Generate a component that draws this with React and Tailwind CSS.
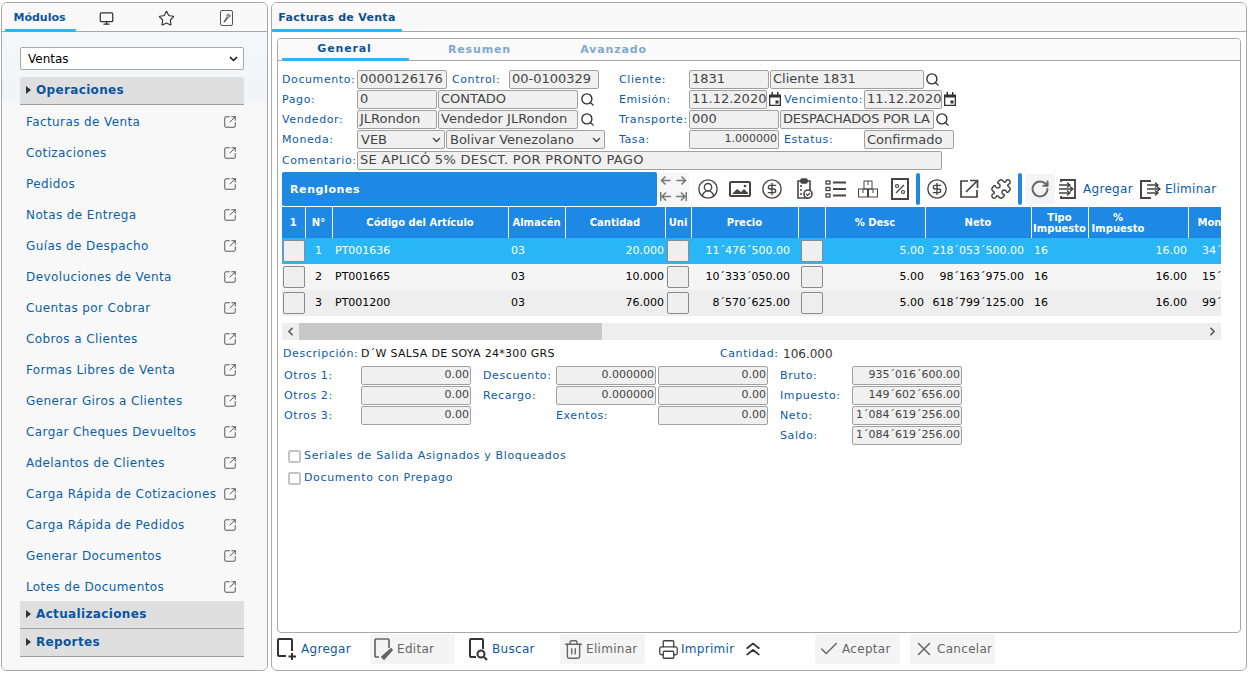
import React from "react";
import {
  Monitor,
  Star,
  SquareArrowOutUpRight,
  Search,
  ChevronsUp,
  Check,
  X,
  Printer,
  Trash2,
  CircleUserRound,
  CircleDollarSign,
  Puzzle,
  RotateCw,
  ChevronLeft,
  ChevronRight,
} from "lucide-react";

const menuItems = [
  "Facturas de Venta",
  "Cotizaciones",
  "Pedidos",
  "Notas de Entrega",
  "Guías de Despacho",
  "Devoluciones de Venta",
  "Cuentas por Cobrar",
  "Cobros a Clientes",
  "Formas Libres de Venta",
  "Generar Giros a Clientes",
  "Cargar Cheques Devueltos",
  "Adelantos de Clientes",
  "Carga Rápida de Cotizaciones",
  "Carga Rápida de Pedidos",
  "Generar Documentos",
  "Lotes de Documentos",
];

const rows = [
  { n: 1, code: "PT001636", qty: "20.000", price: "11´476´500.00", neto: "218´053´500.00", mont: "34´" },
  { n: 2, code: "PT001665", qty: "10.000", price: "10´333´050.00", neto: "98´163´975.00", mont: "15´" },
  { n: 3, code: "PT001200", qty: "76.000", price: "8´570´625.00", neto: "618´799´125.00", mont: "99´" },
];

const Tri = () => (
  <svg width="5" height="8" viewBox="0 0 5 8" className="shrink-0">
    <path d="M0 0l5 4-5 4z" fill="#333" />
  </svg>
);

const Section = ({ title }) => (
  <div className="flex items-center gap-[5px] h-[28px] pl-[6px] pb-[2px] bg-[#dfdfdf] border-b border-[#a0a0a0] rounded-t-[2px] text-[12px] font-bold tracking-[0.35px] text-[#0b55a0]">
    <Tri />
    {title}
  </div>
);

const Label = ({ w, children, className = "", flush }) => (
  <span
    style={{ width: w }}
    className={`shrink-0 whitespace-nowrap tracking-[0.6px] text-[#0b5aa6] ${flush ? "" : "pt-[2px]"} ${className}`}
  >
    {children}
  </span>
);

const Input = ({ w, children, right, small }) => (
  <div
    style={{ width: w }}
    className={`shrink-0 h-[19px] flex items-center overflow-hidden whitespace-nowrap rounded-[2px] border border-[#a0a0a0] bg-[#f0f0f0] text-[#444] ${
      right ? "justify-end pr-[1px]" : "pl-[2px]"
    } ${small ? "text-[11px]" : "text-[13px]"}`}
  >
    {children}
  </div>
);

const Combo = ({ w, children }) => (
  <div
    style={{ width: w }}
    className="shrink-0 h-[19px] flex items-center justify-between px-[3px] rounded-[2px] border border-[#a0a0a0] bg-[#f0f0f0] text-[13px] text-[#444] whitespace-nowrap"
  >
    {children}
    <svg width="9" height="6" viewBox="0 0 9 6" fill="none" stroke="#444" strokeWidth="1.3" className="shrink-0">
      <path d="M1 1l3.5 3.5L8 1" />
    </svg>
  </div>
);

const Lens = () => <Search size={15} strokeWidth={2.2} className="shrink-0 text-[#333]" />;

const Cal = () => (
  <svg width="12" height="14" viewBox="0 0 12 14" className="shrink-0 ml-[2px] mr-[1px]">
    <path d="M0 2.5h12V14H0z" fill="#333" />
    <path d="M2.5 0h1.5v3H2.5zM8 0h1.5v3H8z" fill="#333" />
    <path d="M1.3 5.5h9.4v7.2H1.3z" fill="#fff" />
    <path d="M6.5 8.5h3v3h-3z" fill="#333" />
  </svg>
);

const Icon = ({ children, w = 22 }) => (
  <svg width={w} height="22" viewBox={`0 0 ${w} 22`} fill="none" stroke="#444" strokeWidth="1.6" className="shrink-0">
    {children}
  </svg>
);

const Divider = () => <div className="w-[4px] h-[32px] rounded-[2px] bg-[#1e88e5] shrink-0" />;

const Th = ({ children, className = "" }) => (
  <th className={`border-l border-white first:border-l-0 font-bold text-[10px] leading-[11px] text-white text-center px-0 ${className}`}>
    {children}
  </th>
);

const CellBtn = () => (
  <div className="w-[22px] h-[22px] mx-auto rounded-[2px] border border-[#8a8a8a] bg-[#efefef]" />
);

const FooterBtn = ({ icon, children, disabled, w }) => (
  <div
    style={{ width: w }}
    className={`shrink-0 h-[30px] flex items-center gap-[2px] rounded-[2px] text-[12px] tracking-[0.3px] ${
      disabled ? "bg-[#f4f4f4] text-[#666] pl-[3px]" : "text-[#0b5aa6]"
    }`}
  >
    {icon}
    {children}
  </div>
);

export default function App() {
  return (
    <div className="h-[673px] w-[1249px] flex gap-[3px] pl-[1px] pt-[2px] pb-[2px] pr-[1px] bg-white overflow-hidden text-[11px] font-[DejaVu_Sans]">
      {/* Sidebar */}
      <aside className="w-[267px] shrink-0 flex flex-col rounded-[6px] border border-[#a8a8a8] bg-[#f8f8f8] overflow-hidden">
        <div className="h-[29px] shrink-0 flex border-b border-[#a8a8a8] bg-[#f9f9f9]">
          <div className="w-[71px] ml-[3px] flex items-center justify-center pt-[5px] pr-[2px] border-b-[3px] border-[#29b6f6] rounded-b-[2px] h-[29px] text-[11px] font-bold text-[#0b55a0]">
            Módulos
          </div>
          <div className="flex-1 flex items-center pt-[2px]">
            <div className="w-[60px] flex justify-center"><Monitor size={15} strokeWidth={2} className="text-[#333]" /></div>
            <div className="w-[60px] flex justify-center"><Star size={17} strokeWidth={1.6} className="text-[#333]" /></div>
            <div className="w-[60px] flex justify-center">
              <svg width="13" height="16" viewBox="0 0 13 16" fill="none" stroke="#555" strokeWidth="1">
                <rect x="0.5" y="0.5" width="12" height="15" rx="1.5" />
                <path d="M4 12l3.5-4.5" strokeWidth="1.6" />
                <path d="M7.5 7.5a2 2 0 0 1 1-3.5L7.8 5.5l1 .8 1.2-1.4a2 2 0 0 1-2.5 2.6z" strokeWidth="0.9" />
              </svg>
            </div>
          </div>
        </div>
        <div className="flex-1 pl-[18px] pr-[23px] pt-[15px] bg-[linear-gradient(#f4f7fa_0,#f1f5f8_70px,#f8f8f8_71px)]">
          <div className="h-[23px] flex items-center justify-between pl-[7px] pr-[5px] rounded-[2px] border border-[#a8a8a8] bg-white text-[12px] text-black">
            Ventas
            <svg width="9" height="6" viewBox="0 0 9 6" fill="none" stroke="#111" strokeWidth="1.5">
              <path d="M1 1l3.5 3.5L8 1" />
            </svg>
          </div>
          <div className="mt-[7px]">
            <Section title="Operaciones" />
          </div>
          <ul className="pt-[1px]">
            {menuItems.map((m) => (
              <li key={m} className="h-[31px] flex items-center justify-between pl-[6px] pr-[7px] text-[12px] tracking-[0.4px] text-[#0b5fa8]">
                <span className="w-[191px] overflow-hidden whitespace-nowrap">{m}</span>
                <SquareArrowOutUpRight size={14} strokeWidth={1.5} className="text-[#444]" />
              </li>
            ))}
          </ul>
          <div className="-mt-[1px]">
            <Section title="Actualizaciones" />
          </div>
          <Section title="Reportes" />
        </div>
      </aside>

      {/* Main */}
      <main className="flex-1 min-w-0 mr-[1px] flex flex-col rounded-[6px] border border-[#a8a8a8] bg-white overflow-hidden">
        <div className="h-[29px] shrink-0 border-b border-[#a8a8a8] bg-[#f9f9f9]">
          <div className="w-[130px] h-[29px] flex items-center justify-center pt-[5px] border-b-[3px] border-[#29b6f6] rounded-b-[2px] text-[11px] font-bold tracking-[0.3px] text-[#0b4f8f]">
            Facturas de Venta
          </div>
        </div>

        <div className="mx-[5px] mt-[6px] h-[595px] shrink-0 rounded-[4px] border border-[#a8a8a8] flex flex-col overflow-hidden">
          <div className="h-[22px] shrink-0 flex gap-[7px] pl-[4px] border-b border-[#a8a8a8] bg-[#fafafa] text-[11px] font-bold tracking-[0.85px]">
            <div className="w-[127px] h-[22px] flex items-center justify-center pt-[2px] pr-[2px] border-b-[3px] border-[#29b6f6] rounded-b-[2px] text-[#0b55a0]">General</div>
            <div className="w-[127px] flex items-center justify-center pt-[2px] text-[#7fa8d0]">Resumen</div>
            <div className="w-[127px] flex items-center justify-center pt-[2px] text-[#7fa8d0]">Avanzado</div>
          </div>

          <div className="flex-1 min-h-0 pt-[8px] pl-[4px]">
            {/* Header form */}
            <div className="flex flex-col text-[11px]">
              <div className="flex items-center h-[20px]">
                <Label w={75}>Documento:</Label>
                <Input w={90}>0000126176</Input>
                <Label w={62} className="pl-[5px]">Control:</Label>
                <Input w={90}>00-0100329</Input>
                <Label w={90} className="pl-[20px]">Cliente:</Label>
                <Input w={80}>1831</Input>
                <div className="w-[1px]" />
                <Input w={154}>Cliente 1831</Input>
                <div className="w-[1px]" />
                <Lens />
              </div>
              <div className="flex items-center h-[20px]">
                <Label w={75}>Pago:</Label>
                <Input w={80}>0</Input>
                <div className="w-[1px]" />
                <Input w={140}>CONTADO</Input>
                <div className="w-[2px]" />
                <Lens />
                <Label w={94} className="pl-[24px]">Emisión:</Label>
                <Input w={78}>11.12.2020</Input>
                <Cal />
                <Label w={82} className="pl-[2px] tracking-[0.3px]">Vencimiento:</Label>
                <Input w={78}>11.12.2020</Input>
                <Cal />
              </div>
              <div className="flex items-center h-[20px]">
                <Label w={75}>Vendedor:</Label>
                <Input w={80}>JLRondon</Input>
                <div className="w-[1px]" />
                <Input w={140}>Vendedor JLRondon</Input>
                <div className="w-[2px]" />
                <Lens />
                <Label w={94} className="pl-[24px] tracking-[0.2px]">Transporte:</Label>
                <Input w={90}>000</Input>
                <div className="w-[1px]" />
                <Input w={154}><span className="tracking-[-0.2px]">DESPACHADOS POR LA</span></Input>
                <div className="w-[1px]" />
                <Lens />
              </div>
              <div className="flex items-center h-[21px]">
                <Label w={75}>Moneda:</Label>
                <Combo w={88}>VEB</Combo>
                <div className="w-[1px]" />
                <Combo w={159}>Bolivar Venezolano</Combo>
                <Label w={84} className="pl-[14px]">Tasa:</Label>
                <Input w={90} right small>1.000000</Input>
                <Label w={85} className="pl-[5px]">Estatus:</Label>
                <Input w={90}>Confirmado</Input>
              </div>
              <div className="flex items-center h-[20px]">
                <Label w={75} className="tracking-[0.1px]">Comentario:</Label>
                <Input w={585}><span className="tracking-[0.3px]">SE APLICÓ 5% DESCT. POR PRONTO PAGO</span></Input>
              </div>
            </div>

            {/* Toolbar */}
            <div className="mt-[1px] h-[35px] flex items-center">
              <div className="w-[375px] h-[34px] flex items-center pl-[8px] pt-[4px] rounded-[2px] bg-[#1e88e5] text-[11px] font-bold tracking-[0.6px] text-white">
                Renglones
              </div>
              <div className="ml-[1px] w-[31px] h-[32px] shrink-0 grid grid-cols-2 place-items-center bg-[#f6f6f6]">
                {["M10.5 5.5H1.5M5.5 1.5l-4 4 4 4", "M.5 5.5h9M5.5 1.5l4 4-4 4", "M11 5.5H2M6 1.5l-4 4 4 4M.7 1v9", "M0 5.5h9M5 1.5l4 4-4 4M10.3 1v9"].map((d) => (
                  <svg key={d} width="11" height="11" viewBox="0 0 11 11" fill="none" stroke="#777" strokeWidth="1.5">
                    <path d={d} />
                  </svg>
                ))}
              </div>
              <div className="flex items-center gap-[10px] ml-[8px]">
                <CircleUserRound size={22} strokeWidth={1.5} className="text-[#444]" />
                <Icon>
                  <rect x="1" y="4" width="20" height="14" rx="1" strokeWidth="2" />
                  <path d="M3 16l5-5 4 3 3-3 4 4v1z" fill="#444" stroke="none" />
                  <circle cx="16" cy="8" r="1.3" fill="#444" stroke="none" />
                </Icon>
                <CircleDollarSign size={22} strokeWidth={1.5} className="text-[#444]" />
                <Icon>
                  <path d="M14 3h3v11M15 20H5V3h3" />
                  <rect x="8" y="1" width="6" height="4" rx="1" fill="#444" />
                  <path d="M7 8h2M7 12h2M7 16h2" />
                  <circle cx="15" cy="16" r="4" fill="#fff" />
                  <path d="M13 16l1.5 1.5L17 15" strokeWidth="1.2" />
                </Icon>
                <Icon>
                  <rect x="1" y="3" width="4" height="3" strokeWidth="1.3" />
                  <rect x="1" y="9.5" width="4" height="3" strokeWidth="1.3" />
                  <rect x="1" y="16" width="4" height="3" strokeWidth="1.3" />
                  <path d="M8 4.5h13M8 11h13M8 17.5h13" strokeWidth="1.8" />
                </Icon>
                <Icon>
                  <rect x="7" y="3" width="8" height="8" strokeWidth="1" />
                  <rect x="1.5" y="11" width="9" height="8" strokeWidth="1" />
                  <rect x="11.5" y="11" width="9" height="8" strokeWidth="1" />
                  <path d="M11 3v4M6 11v4M16 11v4" strokeWidth="1" />
                </Icon>
                <Icon>
                  <rect x="3" y="1" width="16" height="20" strokeWidth="2" />
                  <path d="M7 15l8-8" strokeWidth="1.3" />
                  <circle cx="8" cy="8" r="1.5" strokeWidth="1.2" />
                  <circle cx="14" cy="14" r="1.5" strokeWidth="1.2" />
                </Icon>
              </div>
              <div className="ml-[5px]"><Divider /></div>
              <div className="flex items-center gap-[10px] ml-[6px]">
                <CircleDollarSign size={22} strokeWidth={1.5} className="text-[#444]" />
                <Icon>
                  <path d="M10 3H3v16h16v-7" strokeWidth="1.7" />
                  <path d="M8 14L19 3M12 2.5h7.5V10" strokeWidth="1.7" />
                </Icon>
                <Puzzle size={22} strokeWidth={1.6} className="text-[#444]" />
              </div>
              <div className="ml-[6px]"><Divider /></div>
              <div className="ml-[3px] w-[30px] h-[30px] shrink-0 flex items-center justify-center bg-[#f4f4f4] rounded-[2px]">
                <RotateCw size={20} strokeWidth={2.4} className="text-[#666]" />
              </div>
              <div className="ml-[3px] flex items-center gap-[4px] text-[12px] tracking-[0.3px] text-[#0b5aa6] whitespace-nowrap">
                <Icon w={20}>
                  <path d="M3 4V2h14v18H3v-2" strokeWidth="1.8" />
                  <path d="M1 7h11M9 4.5L12 7 9 9.5M1 11h14M12 8.5l3 2.5-3 2.5M1 15h11M9 12.5l3 2.5-3 2.5" strokeWidth="1.3" />
                </Icon>
                <span className="ml-[1px]">Agregar</span>
                <div className="ml-[2px]">
                  <Icon w={24}>
                    <path d="M12 3H2v17h10" strokeWidth="2" />
                    <path d="M8 7h11M16 4.5L19 7l-3 2.5M8 11h13M18 8.5l3 2.5-3 2.5M8 15h11M16 12.5l3 2.5-3 2.5" strokeWidth="1.3" />
                  </Icon>
                </div>
                <span className="-ml-[2px]">Eliminar</span>
              </div>
            </div>

            {/* Table */}
            <div className="mt-[1px] w-[939px] overflow-hidden">
              <table className="table-fixed w-[1000px] border-collapse text-[11px]">
                <colgroup>
                  {[23, 27, 176, 57, 100, 26, 107, 27, 100, 106, 57, 100, 94].map((w, i) => (
                    <col key={i} style={{ width: w }} />
                  ))}
                </colgroup>
                <thead>
                  <tr className="h-[31px] bg-[#1e88e5]">
                    <Th>1</Th>
                    <Th>N°</Th>
                    <Th>Código del Artículo</Th>
                    <Th>Almacén</Th>
                    <Th>Cantidad</Th>
                    <Th>Uni</Th>
                    <Th>Precio</Th>
                    <Th></Th>
                    <Th>% Desc</Th>
                    <Th>Neto</Th>
                    <Th className="whitespace-nowrap overflow-hidden">Tipo<br />Impuesto</Th>
                    <Th><div className="w-[57px] ml-[1px]">%<br />Impuesto</div></Th>
                    <Th className="text-left pl-[9px]">Monto</Th>
                  </tr>
                </thead>
                <tbody>
                  {rows.map((r) => (
                    <tr
                      key={r.n}
                      className={`h-[26px] ${
                        r.n === 1 ? "bg-[#29b6f6] text-white" : r.n === 2 ? "bg-[#f5f5f5] text-black" : "bg-[#eeeeee] text-black"
                      }`}
                    >
                      <td><CellBtn /></td>
                      <td className="text-center">{r.n}</td>
                      <td className="pl-[3px]">{r.code}</td>
                      <td className="pl-[3px]">03</td>
                      <td className="text-right pr-[1px]">{r.qty}</td>
                      <td><CellBtn /></td>
                      <td className="text-right pr-[8px]">{r.price}</td>
                      <td><CellBtn /></td>
                      <td className="text-right pr-[1px]">5.00</td>
                      <td className="text-right pr-[7px]">{r.neto}</td>
                      <td className="pl-[3px]">16</td>
                      <td className="text-right pr-[1px]">16.00</td>
                      <td className="text-right whitespace-nowrap pr-[1px]">
                        <span className="block w-[33px] overflow-hidden text-left ml-[14px]">{r.mont}</span>
                      </td>
                    </tr>
                  ))}
                </tbody>
              </table>
            </div>
            <div className="mt-[7px] w-[939px] h-[17px] flex items-center justify-between bg-[#eeeeee]">
              <div className="flex items-center h-full">
                <div className="w-[17px] flex justify-center"><ChevronLeft size={13} strokeWidth={3} className="text-[#555]" /></div>
                <div className="w-[303px] h-full bg-[#c8c8c8]" />
              </div>
              <div className="w-[17px] flex justify-center"><ChevronRight size={13} strokeWidth={3} className="text-[#555]" /></div>
            </div>

            {/* Totals */}
            <div className="mt-[5px] h-[18px] flex items-center pl-[1px] text-[11px]">
              <Label flush w={78} className="tracking-[0.4px]">Descripción:</Label>
              <span className="w-[359px] shrink-0 tracking-[0.3px] text-[#111]">D´W SALSA DE SOYA 24*300 GRS</span>
              <Label flush w={63} className="tracking-[0.4px]">Cantidad:</Label>
              <span className="text-[12px] text-[#333]">106.000</span>
            </div>
            <div className="mt-[3px] flex flex-col gap-[1px] pl-[2px] text-[11px]">
              <div className="flex items-center h-[19px]">
                <Label w={77}>Otros 1:</Label>
                <Input w={110} right small>0.00</Input>
                <Label w={85} className="pl-[12px]">Descuento:</Label>
                <Input w={100} right small>0.000000</Input>
                <div className="w-[2px]" />
                <Input w={110} right small>0.00</Input>
                <Label w={84} className="pl-[12px]">Bruto:</Label>
                <Input w={110} right small>935´016´600.00</Input>
              </div>
              <div className="flex items-center h-[19px]">
                <Label w={77}>Otros 2:</Label>
                <Input w={110} right small>0.00</Input>
                <Label w={85} className="pl-[12px]">Recargo:</Label>
                <Input w={100} right small>0.000000</Input>
                <div className="w-[2px]" />
                <Input w={110} right small>0.00</Input>
                <Label w={84} className="pl-[12px]">Impuesto:</Label>
                <Input w={110} right small>149´602´656.00</Input>
              </div>
              <div className="flex items-center h-[19px]">
                <Label w={77}>Otros 3:</Label>
                <Input w={110} right small>0.00</Input>
                <Label w={187} className="pl-[85px]">Exentos:</Label>
                <Input w={110} right small>0.00</Input>
                <Label w={84} className="pl-[12px]">Neto:</Label>
                <Input w={110} right small>1´084´619´256.00</Input>
              </div>
              <div className="flex items-center h-[19px] pl-[496px]">
                <Label w={72}>Saldo:</Label>
                <Input w={110} right small>1´084´619´256.00</Input>
              </div>
            </div>

            <div className="mt-[4px] pl-[6px] flex flex-col gap-[7px] text-[11px] tracking-[0.65px] text-[#0b5aa6]">
              <label className="flex items-center gap-[3px] h-[15px]">
                <span className="w-[13px] h-[13px] rounded-[2px] border-2 border-[#c4c4c4] bg-white" />
                Seriales de Salida Asignados y Bloqueados
              </label>
              <label className="flex items-center gap-[3px] h-[15px]">
                <span className="w-[13px] h-[13px] rounded-[2px] border-2 border-[#c4c4c4] bg-white" />
                Documento con Prepago
              </label>
            </div>
          </div>
        </div>

        {/* Footer buttons */}
        <div className="flex-1 flex items-center pl-[5px] pb-[6px] pt-[1px]">
          <FooterBtn w={93} icon={
            <svg width="22" height="24" viewBox="0 0 22 24" fill="none" stroke="#333" strokeWidth="2">
              <path d="M9 19H2a1 1 0 0 1-1-1V3a1 1 0 0 1 1-1h12a1 1 0 0 1 1 1v11" />
              <path d="M15 16v7M11.5 19.5h7.5" />
            </svg>
          }>Agregar</FooterBtn>
          <FooterBtn w={85} disabled icon={
            <svg width="22" height="24" viewBox="0 0 22 24" fill="none" stroke="#666" strokeWidth="1.7">
              <path d="M6 20H3a1 1 0 0 1-1-1V3a1 1 0 0 1 1-1h12a1 1 0 0 1 1 1v8" />
              <path d="M9 20l9-8 1 1-8 9z" fill="#666" />
            </svg>
          }>Editar</FooterBtn>
          <div className="w-[13px]" />
          <FooterBtn w={92} icon={
            <svg width="22" height="24" viewBox="0 0 22 24" fill="none" stroke="#333" strokeWidth="2">
              <path d="M8 20H3a1 1 0 0 1-1-1V3a1 1 0 0 1 1-1h11a1 1 0 0 1 1 1v9" />
              <circle cx="13" cy="17" r="3.5" />
              <path d="M16 20l3 3" />
            </svg>
          }>Buscar</FooterBtn>
          <FooterBtn w={85} disabled icon={<Trash2 size={21} strokeWidth={1.6} className="text-[#666]" />}>Eliminar</FooterBtn>
          <div className="w-[13px]" />
          <FooterBtn w={84} icon={<Printer size={21} strokeWidth={1.5} className="text-[#444]" />}>Imprimir</FooterBtn>
          <ChevronsUp size={22} strokeWidth={1.8} className="text-[#333] shrink-0 scale-x-125" />
          <div className="w-[51px]" />
          <FooterBtn w={85} disabled icon={<Check size={22} strokeWidth={1.6} className="text-[#666]" />}>Aceptar</FooterBtn>
          <div className="w-[10px]" />
          <FooterBtn w={85} disabled icon={<X size={22} strokeWidth={1.6} className="text-[#666]" />}>Cancelar</FooterBtn>
        </div>
      </main>
    </div>
  );
}
